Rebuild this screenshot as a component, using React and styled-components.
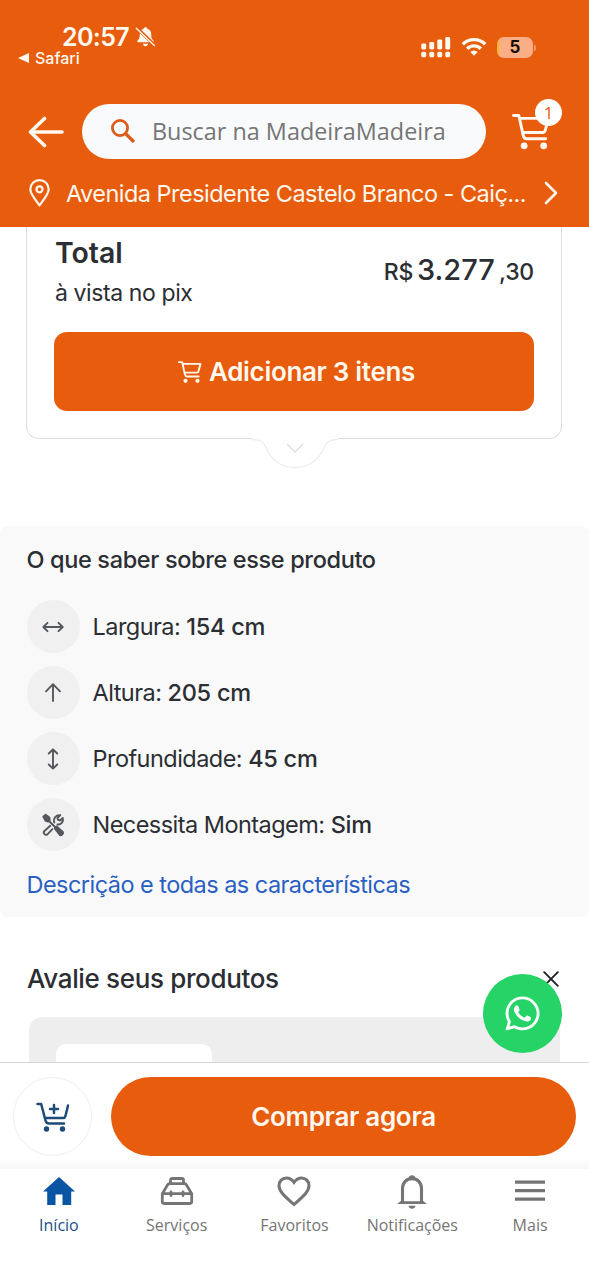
import React from 'react';
import styled, { createGlobalStyle } from 'styled-components';
import { FaWhatsapp } from 'react-icons/fa';

const Global = createGlobalStyle`
  *, *::before, *::after { box-sizing: border-box; }
  body { margin: 0; background: #fff; font-family: Inter, "Liberation Sans", sans-serif; color: #2b2e33; }
  button { border: 0; background: none; padding: 0; margin: 0; font: inherit; color: inherit; }
  svg { display: block; flex: none; }
`;

const orange = '#e85c0d';

const Text = styled.span`
  display: block;
  white-space: nowrap;
  font-family: ${p => (p.$open ? '"Open Sans", "Noto Sans", sans-serif' : 'inherit')};
  font-size: ${p => p.$size}px;
  line-height: ${p => p.$lh || Math.round(p.$size * 1.3)}px;
  font-weight: ${p => p.$weight || 400};
  letter-spacing: ${p => p.$track || 0}px;
  color: ${p => p.$color || 'inherit'};
`;

const Screen = styled.div`
  width: 589px;
  height: 1280px;
  display: flex;
  flex-direction: column;
  overflow: hidden;
  background: #fff;
`;

/* Header */
const Header = styled.header`
  flex: none;
  height: 227px;
  background: ${orange};
  color: #fff8ee;
  display: flex;
  flex-direction: column;
`;
const StatusBar = styled.div`
  height: 104px;
  display: flex;
  justify-content: space-between;
  padding: 21px 56px 0 18px;
`;
const Clock = styled.div`
  display: flex;
  align-items: center;
  gap: 6px;
  padding-left: 44px;
  height: 32px;
`;
const BackToApp = styled.div`
  display: flex;
  align-items: center;
  gap: 6px;
  height: 10px;
`;
const Indicators = styled.div`
  display: flex;
  align-items: center;
  height: 20px;
  margin-top: 16px;
`;
const WifiSlot = styled.span`
  padding-left: 10px;
`;
const SearchRow = styled.div`
  display: flex;
  align-items: center;
  height: 55px;
  padding-left: 28px;
`;
const SearchField = styled.div`
  width: 404px;
  height: 55px;
  margin: 0 26px 0 18px;
  padding: 0 0 2px 28px;
  border-radius: 28px;
  background: #f9fafb;
  display: flex;
  align-items: center;
  gap: 16px;
`;
const CartButton = styled.button`
  position: relative;
  width: 40px;
  height: 40px;
`;
const Badge = styled.span`
  position: absolute;
  top: -13px;
  right: -10px;
  width: 27px;
  height: 27px;
  border-radius: 50%;
  background: #fff;
  color: ${orange};
  font: 500 17px/27px "Open Sans", sans-serif;
  text-align: center;
`;
const AddressRow = styled.div`
  display: flex;
  align-items: center;
  height: 68px;
  padding: 0 31px 0 29px;
`;
const Address = styled.div`
  flex: 1;
  padding: 1px 0 0 16px;
`;

/* Page content */
const Content = styled.main`
  flex: 1;
  min-height: 0;
  overflow: hidden;
  display: flex;
  flex-direction: column;
`;
const TotalCard = styled.section`
  position: relative;
  flex: none;
  height: 212px;
  margin: 0 27px 0 26px;
  padding: 8px 27px 0;
  border: 1.5px solid #dcdde0;
  border-top: 0;
  border-radius: 0 0 13px 13px;
`;
const TotalRow = styled.div`
  display: flex;
  justify-content: space-between;
  height: 97px;
  padding-left: 1px;
`;
const Price = styled.div`
  display: flex;
  align-items: baseline;
  gap: 4px;
  padding-top: 16px;
`;
const AddButton = styled.button`
  width: 100%;
  height: 79px;
  padding-left: 5px;
  border-radius: 13px;
  background: ${orange};
  color: #fff8ee;
  display: flex;
  align-items: center;
  justify-content: center;
  gap: 7px;
`;
const Notch = styled.svg`
  position: absolute;
  left: 225px;
  bottom: -31px;
`;
const Facts = styled.section`
  flex: none;
  height: 391px;
  margin-top: 87px;
  padding: 18px 26px 0 26.5px;
  background: #f9f9f9;
  border-radius: 8px;
`;
const FactList = styled.ul`
  list-style: none;
  margin: 24px 0 18px;
  padding: 0;
  display: flex;
  flex-direction: column;
  gap: 13px;
`;
const Fact = styled.li`
  display: flex;
  align-items: center;
  gap: 13px;
  height: 53px;
  b { font-weight: 500; letter-spacing: -0.25px; }
`;
const FactIcon = styled.span`
  width: 53px;
  height: 53px;
  border-radius: 50%;
  background: #f0f0f0;
  display: grid;
  place-items: center;
`;
const Reviews = styled.section`
  flex: none;
  margin-top: 45px;
  padding: 0 29px;
`;
const ReviewsHead = styled.div`
  display: flex;
  justify-content: space-between;
  align-items: center;
  height: 33px;
  margin: 0 1px 22px -2px;
`;
const Skeleton = styled.div`
  height: 90px;
  padding: 27px;
  border-radius: 13px;
  background: #eee;
`;
const SkeletonBlock = styled.div`
  width: 156px;
  height: 60px;
  border-radius: 10px;
  background: #fff;
`;
const WhatsApp = styled.button`
  position: absolute;
  left: 483px;
  top: 974px;
  width: 79px;
  height: 79px;
  border-radius: 50%;
  background: #25d366;
  color: #fff;
  display: grid;
  place-items: center;
`;

/* Bottom bars */
const BuyBar = styled.div`
  flex: none;
  height: 107px;
  padding: 14px 13px 0;
  border-top: 1.5px solid #d4d5d7;
  display: flex;
  gap: 19px;
  background: linear-gradient(#fff 96px, #f7f7f8 105px);
`;
const RoundButton = styled.button`
  flex: none;
  width: 79px;
  height: 79px;
  border: 1.5px solid #eeeef0;
  border-radius: 50%;
  background: #fff;
  display: grid;
  place-items: center;
`;
const BuyButton = styled.button`
  width: 465px;
  height: 79px;
  border-radius: 40px;
  background: ${orange};
  color: #fff8ee;
  display: grid;
  place-items: center;
`;
const TabBar = styled.nav`
  flex: none;
  height: 111px;
  display: grid;
  grid-template-columns: repeat(5, 1fr);
  background: #fff;
`;
const Tab = styled.div`
  display: flex;
  flex-direction: column;
  align-items: center;
  color: ${p => (p.$active ? '#1d4f88' : '#757575')};
`;
const TabIcon = styled.span`
  height: 44px;
  display: flex;
  align-items: center;
`;

const CartIcon = ({ size, sw = 3 }) => (
  <svg width={size} height={size} viewBox="0 0 40 40" fill="none" stroke="currentColor" strokeWidth={sw} strokeLinecap="round" strokeLinejoin="round">
    <path d="M1.500 3.500H7L11.500 24c.6 2.600 1.400 3.500 3.500 3.500h19.500" />
    <path d="M8.500 6.500h29L34 19.200c-.4 1.400-1 1.800-2.300 1.800H11.500" />
    <circle cx="12.500" cy="34.700" r="3.500" fill="currentColor" stroke="none" />
    <circle cx="32.500" cy="34.700" r="3.500" fill="currentColor" stroke="none" />
  </svg>
);

const SilentBell = () => (
  <svg width="21" height="22" viewBox="0 0 22 22">
    <path d="M11 .8c1 0 1.700.6 1.900 1.500 2.700.7 4.100 3 4.100 5.700 0 4.200 1 5.300 2.200 6.500.8.9.4 1.900-.8 1.900H3.600c-1.200 0-1.600-1-.8-1.900C4 13.300 5 12.200 5 8c0-2.700 1.400-5 4.100-5.700C9.300 1.400 10 .8 11 .8zM8.300 18h5.400c-.2 1.600-1.300 2.600-2.700 2.600S8.500 19.600 8.300 18z" fill="currentColor" />
    <path d="M2 1.500 20.500 19.500" stroke={orange} strokeWidth="3.600" />
    <path d="M1.300 1.800 20.300 20" stroke="currentColor" strokeWidth="1.500" strokeLinecap="round" />
  </svg>
);

const Signal = () => (
  <svg width="30" height="22" viewBox="0 0 30 22" fill="currentColor">
    {[[0, 7.5], [8, 6], [16, 3.5], [24, 1]].map(([x, y]) => (
      <g key={x}>
        <rect x={x + 0.3} y={y} width="4.900" height={13.500 - y} rx="1.400" />
        <rect x={x + 0.3} y="15.700" width="4.900" height="5.600" rx="1.600" />
      </g>
    ))}
  </svg>
);

const Wifi = () => (
  <svg width="26" height="20" viewBox="0 0 26 20" fill="none" stroke="currentColor" strokeWidth="3.400">
    <path d="M1.800 7.200a16 16 0 0 1 22.400 0" />
    <path d="M6.200 11.700a9.700 9.700 0 0 1 13.600 0" />
    <path d="M13 18.800 9.300 15a5.300 5.300 0 0 1 7.400 0z" fill="currentColor" stroke="none" />
  </svg>
);

const Battery = styled.div`
  position: relative;
  width: 36px;
  height: 21px;
  margin-left: 10px;
  border-radius: 7px;
  background: linear-gradient(90deg, #ffb52e 0 2px, #f9ae86 2px);
  color: #160b05;
  font: 700 17px/21px Inter, sans-serif;
  text-align: center;
  &::after {
    content: '';
    position: absolute;
    right: -3px;
    top: 8px;
    width: 2px;
    height: 6px;
    border-radius: 0 2px 2px 0;
    background: #f09a6b;
  }
`;

const lineIcon = { fill: 'none', stroke: '#54585e', strokeWidth: 1.9, strokeLinecap: 'round', strokeLinejoin: 'round' };
const WidthIcon = () => (
  <svg width="24" height="24" viewBox="0 0 24 24" {...lineIcon}><path d="M2.500 12h19M6.500 7.800 2.300 12l4.200 4.200M17.500 7.800l4.200 4.200-4.200 4.200" /></svg>
);
const HeightIcon = () => (
  <svg width="24" height="24" viewBox="0 0 24 24" {...lineIcon}><path d="M12 20V3.500M5 10.300 12 3.200l7 7.100" /></svg>
);
const DepthIcon = () => (
  <svg width="24" height="24" viewBox="0 0 24 24" {...lineIcon}><path d="M12 2.500v19M7.800 6.500 12 2.300l4.200 4.200M7.800 17.500l4.200 4.200 4.200-4.200" /></svg>
);
const ToolsIcon = () => (
  <svg width="24" height="24" viewBox="0 0 24 24" {...lineIcon}>
    <path d="M2.300 3.700 4.600 1.800 8.400 4.600 8.700 7 7.200 8.500 4.800 7.900z" fill="#54585e" />
    <path d="m8 8 6.500 6.500" strokeWidth="2" />
    <path d="m13.800 15.500 1.900-2 6.300 5.700c.5 1.400-1.300 3.500-3 3z" fill="#54585e" />
    <path d="m9.200 12.800-6 5.400c-1.400 1.500.9 4.800 3.200 3.200l5-5.200M13.300 9.500c-1.300-4.200 1.800-8 6-7.300L16.500 5c0 1.500.8 2.300 2.500 2.500L21.800 5c1 3.700-1.700 7-5.400 6.500" />
  </svg>
);

const HomeIcon = () => (
  <svg width="32" height="28" viewBox="0 0 32 28" fill="#0a55a3"><path d="M16 0 32 14.500h-3.800V28h-8.700V17.500h-7V28H4.200V14.500H0z" /></svg>
);
const ToolboxIcon = () => (
  <svg width="34" height="28" viewBox="0 0 34 28" fill="none" stroke="currentColor" strokeWidth="2.800" strokeLinejoin="round" strokeLinecap="round">
    <path d="M10.500 6.500V3.100c0-1 .6-1.600 1.700-1.600h9.600c1.100 0 1.700.6 1.700 1.600v3.400" />
    <path d="M9.500 6.700h15c1 0 1.600.4 2 1.300l5.200 8.700v7.900c0 1.200-.7 1.900-1.900 1.900H4.200c-1.200 0-1.900-.7-1.900-1.900v-7.900L7.500 8c.4-.9 1-1.300 2-1.300zM2.500 16.700h29M11 14.800v3.800M23 14.800v3.800" />
  </svg>
);
const HeartIcon = () => (
  <svg width="34" height="31" viewBox="0 0 34 31" fill="none" stroke="currentColor" strokeWidth="3"><path d="M17 28.500C10 22 2 16.500 2 9.600 2 5.200 5.300 2 9.400 2c3 0 5.700 1.700 7.600 4.400C18.900 3.700 21.600 2 24.600 2 28.700 2 32 5.200 32 9.600 32 16.500 24 22 17 28.500z" /></svg>
);
const BellIcon = () => (
  <svg width="30" height="35" viewBox="0 0 30 35">
    <path d="M5.500 28V14.500C5.500 8.500 9.500 4.600 15 4.600s9.500 3.900 9.500 9.900V28" fill="none" stroke="currentColor" strokeWidth="3.100" />
    <path d="M11.500 4.800a3.500 3.500 0 0 1 7 0zM0 30l4.500-3.500V27.300h21v-.8L30 30zM11.500 31.700h7c-.3 1.800-1.700 3-3.500 3s-3.200-1.200-3.500-3z" fill="currentColor" />
  </svg>
);
const MenuIcon = () => (
  <svg width="30" height="22" viewBox="0 0 30 22" fill="currentColor"><path d="M0 .5h30v3.200H0zM0 9h30v3.200H0zM0 17.500h30v3.200H0z" /></svg>
);

const facts = [
  { label: 'Largura', value: '154 cm', Icon: WidthIcon },
  { label: 'Altura', value: '205 cm', Icon: HeightIcon },
  { label: 'Profundidade', value: '45 cm', Icon: DepthIcon },
  { label: 'Necessita Montagem', value: 'Sim', Icon: ToolsIcon },
];
const tabs = [
  { label: 'Início', Icon: HomeIcon, active: true },
  { label: 'Serviços', Icon: ToolboxIcon },
  { label: 'Favoritos', Icon: HeartIcon },
  { label: 'Notificações', Icon: BellIcon },
  { label: 'Mais', Icon: MenuIcon },
];

export default function App() {
  return (
    <Screen>
      <Global />
      <Header>
        <StatusBar>
          <div>
            <Clock>
              <Text $size={25} $weight={600} $track={-0.6}>20:57</Text>
              <SilentBell />
            </Clock>
            <BackToApp>
              <svg width="11" height="10" viewBox="0 0 11 10" fill="currentColor"><path d="M0 5 11 0v10z" /></svg>
              <Text $size={16} $weight={500}>Safari</Text>
            </BackToApp>
          </div>
          <Indicators>
            <Signal />
            <WifiSlot><Wifi /></WifiSlot>
            <Battery>5</Battery>
          </Indicators>
        </StatusBar>
        <SearchRow>
          <svg width="36" height="32" viewBox="0 0 36 32" fill="none" stroke="currentColor" strokeWidth="3.600" strokeLinecap="round" strokeLinejoin="round"><path d="M34 16H2.500M16.500 2.500 2.500 16l14 13.500" /></svg>
          <SearchField>
            <svg width="26" height="26" viewBox="0 0 26 26" fill="none" stroke="#dc5a1c" strokeWidth="2.800"><circle cx="10" cy="10" r="7.600" /><path d="m15.500 15.500 8.500 8.500" strokeWidth="3.200" /></svg>
            <Text $open $size={23.4} $color="#757575">Buscar na MadeiraMadeira</Text>
          </SearchField>
          <CartButton aria-label="Carrinho">
            <CartIcon size={39} />
            <Badge>1</Badge>
          </CartButton>
        </SearchRow>
        <AddressRow>
          <svg width="21" height="28" viewBox="0 0 21 28" fill="none" stroke="currentColor" strokeWidth="2.200"><path d="M10.500 26.300C6 20.500 1.300 15 1.300 10.300a9.200 9.200 0 0 1 18.400 0c0 4.700-4.700 10.200-9.200 16z" strokeLinejoin="round" /><circle cx="10.500" cy="10.300" r="3" /></svg>
          <Address><Text $size={23.5} $track={-0.53}>Avenida Presidente Castelo Branco - Caiç...</Text></Address>
          <svg width="14" height="24" viewBox="0 0 14 24" fill="none" stroke="currentColor" strokeWidth="2.600" strokeLinecap="round" strokeLinejoin="round"><path d="M2 2l10 10L2 22" /></svg>
        </AddressRow>
      </Header>

      <Content>
        <TotalCard>
          <TotalRow>
            <div>
              <Text $size={28.4} $weight={600} $lh={35}>Total</Text>
              <Text $size={23} $lh={46} $track={-0.4}>à vista no pix</Text>
            </div>
            <Price>
              <Text $size={23} $weight={500} $track={-0.3}>R$</Text>
              <Text $size={29} $weight={500}>3.277</Text>
              <Text $size={23} $weight={500} $track={-0.2}>,30</Text>
            </Price>
          </TotalRow>
          <AddButton>
            <CartIcon size={24} sw={3.2} />
            <Text $size={26} $weight={600} $track={-0.32}>Adicionar 3 itens</Text>
          </AddButton>
          <Notch width="86" height="33" viewBox="0 0 92 33" preserveAspectRatio="none">
            <path d="M0 0h92v3.500c-9 0-12 2-15 8C72 24 60 31.500 46 31.500S20 24 15 11.500c-3-6-6-8-15-8z" fill="#fff" />
            <path d="M0 3.500c9 0 12 2 15 8C20 24 32 31.500 46 31.500S72 24 77 11.500c3-6 6-8 15-8" fill="none" stroke="#ececee" strokeWidth="1.300" />
            <path d="m37.500 8 8.500 8 8.500-8" fill="none" stroke="#dcdde0" strokeWidth="1.500" />
          </Notch>
        </TotalCard>

        <Facts>
          <Text $size={23.5} $weight={500} $lh={32} $track={-0.36}>O que saber sobre esse produto</Text>
          <FactList>
            {facts.map(({ label, value, Icon }) => (
              <Fact key={label}>
                <FactIcon><Icon /></FactIcon>
                <Text $size={23.5} $lh={32} $track={-0.54}>{label}: <b>{value}</b></Text>
              </Fact>
            ))}
          </FactList>
          <Text $size={23.5} $track={-0.54} $color="#2a5fc4">Descrição e todas as características</Text>
        </Facts>

        <Reviews>
          <ReviewsHead>
            <Text $size={26} $weight={500} $track={-0.35}>Avalie seus produtos</Text>
            <svg width="16" height="16" viewBox="0 0 16 16" stroke="#222" strokeWidth="1.900" strokeLinecap="round"><path d="m1.200 1.200 13.600 13.600M14.800 1.200 1.200 14.800" /></svg>
          </ReviewsHead>
          <Skeleton><SkeletonBlock /></Skeleton>
        </Reviews>
      </Content>

      <BuyBar>
        <RoundButton aria-label="Adicionar ao carrinho">
          <svg width="34" height="30" viewBox="0 0 34 30" fill="none" stroke="#1e4a78" strokeWidth="2.500" strokeLinecap="round" strokeLinejoin="round">
            <path d="M1.500 2h3.700l4.300 16.500c.6 2.300 1.600 3 3.500 3h15M8.700 16h18.500c1.400 0 1.800-.5 2.200-1.800L32 3.500M18 3v8M14 7h8" />
            <circle cx="10.500" cy="27" r="2.700" fill="#1e4a78" stroke="none" />
            <circle cx="26.500" cy="27" r="2.700" fill="#1e4a78" stroke="none" />
          </svg>
        </RoundButton>
        <BuyButton><Text $size={26} $weight={600} $track={-0.3}>Comprar agora</Text></BuyButton>
      </BuyBar>
      <TabBar>
        {tabs.map(({ label, Icon, active }) => (
          <Tab key={label} $active={active}>
            <TabIcon><Icon /></TabIcon>
            <Text $open $size={16} $lh={24}>{label}</Text>
          </Tab>
        ))}
      </TabBar>
      <WhatsApp aria-label="WhatsApp"><FaWhatsapp size={39} /></WhatsApp>
    </Screen>
  );
}
